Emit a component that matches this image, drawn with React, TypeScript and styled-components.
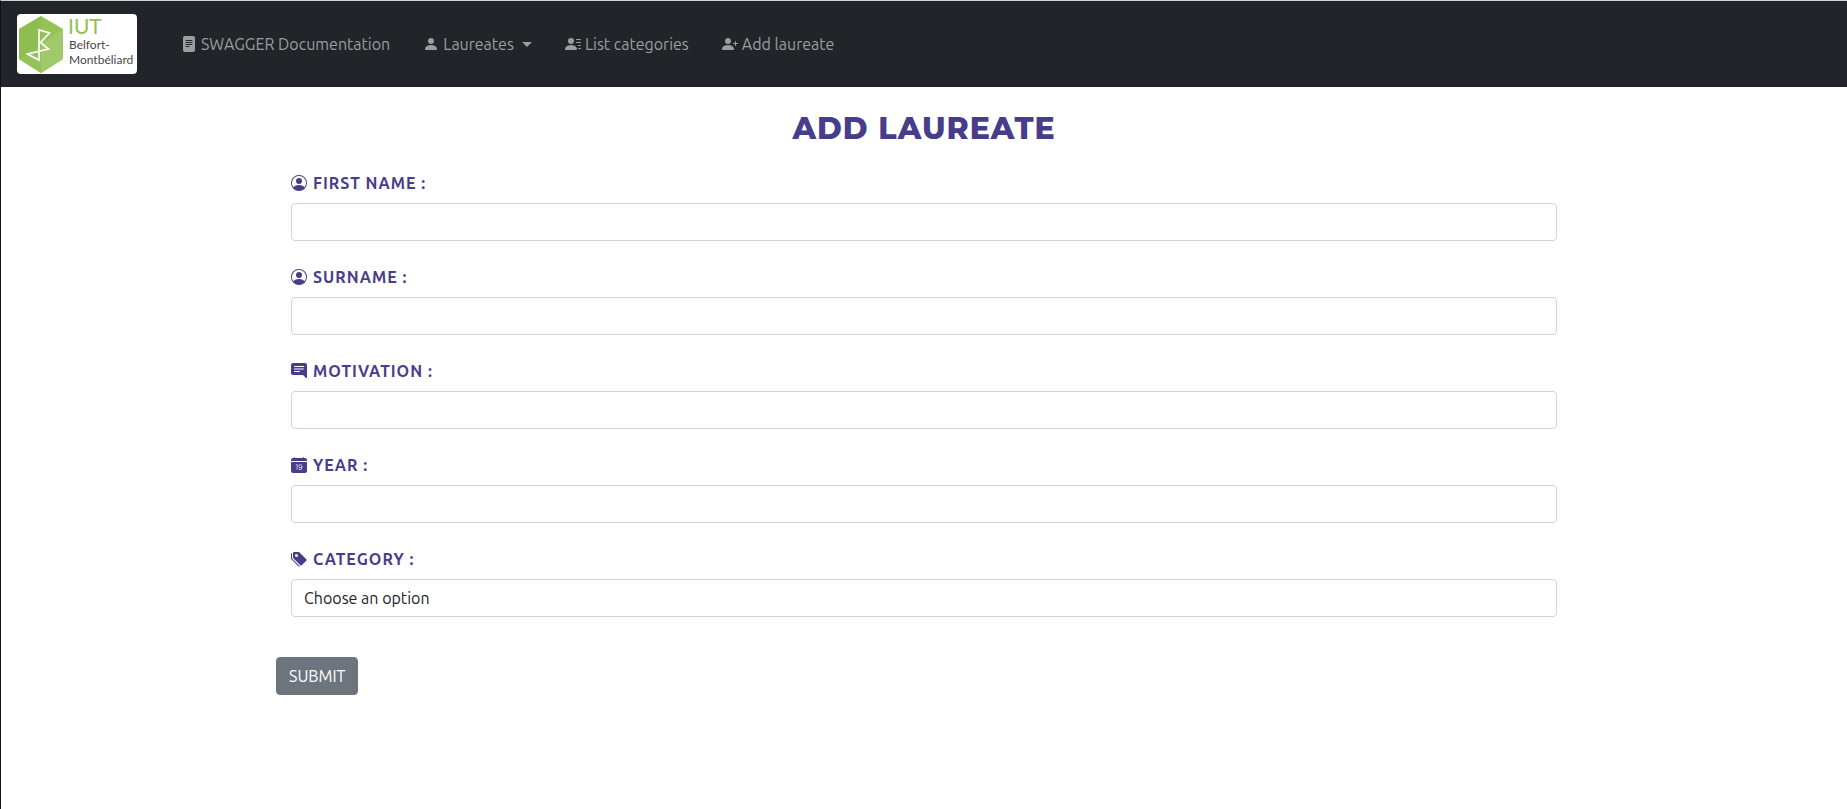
import React, { useId } from "react";
import styled, { createGlobalStyle } from "styled-components";
import {
  BsCalendarDateFill,
  BsChatRightTextFill,
  BsFileTextFill,
  BsPersonCircle,
  BsPersonFill,
  BsPersonLinesFill,
  BsPersonPlusFill,
  BsTagsFill,
} from "react-icons/bs";
import type { IconType } from "react-icons";

const GlobalStyle = createGlobalStyle`
  *, *::before, *::after { box-sizing: border-box; }
  body {
    margin: 0;
    color: #212529;
    background: #fff;
    font: 400 16px/24px Ubuntu, "Noto Sans", sans-serif;
  }
`;

const Page = styled.div`
  min-height: 100vh;
  border-left: 1px solid #101113;
  border-top: 1px solid #c9d3d1;
`;

const Navbar = styled.nav`
  display: flex;
  align-items: center;
  gap: 36px;
  padding: 13px 16px;
  background: #212529;
`;

const Brand = styled.a`
  display: block;
  height: 60px;
`;

const NavList = styled.ul`
  display: flex;
  gap: 17px;
  margin: 0;
  padding: 0;
  list-style: none;
`;

const NavLink = styled.a`
  display: flex;
  align-items: center;
  gap: 4px;
  padding: 8px;
  color: #9b9d9e;
  text-decoration: none;
  white-space: nowrap;
`;

const Caret = styled.span`
  margin-left: 4px;
  border: 5px solid transparent;
  border-top-color: currentColor;
  border-bottom: 0;
`;

const Main = styled.main`
  max-width: 1320px;
  margin: 0 auto;
  padding: 24px 12px;
`;

const Title = styled.h1`
  margin: 0 0 24px;
  color: #483d8b;
  font: 800 30px/36px Montserrat, Inter, sans-serif;
  letter-spacing: 1px;
  text-align: center;
  text-transform: uppercase;
`;

const Fields = styled.div`
  display: grid;
  gap: 24px;
  padding: 0 15px;
  margin-bottom: 40px;
`;

const Field = styled.div`
  display: grid;
  gap: 8px;
`;

const Label = styled.label`
  display: flex;
  align-items: center;
  gap: 6px;
  color: #483d8b;
  font-weight: 700;
  letter-spacing: 1px;
  text-transform: uppercase;
`;

const Input = styled.input`
  width: 100%;
  height: 38px;
  padding: 6px 12px;
  color: #212529;
  background: #fff;
  border: 1px solid #ced4da;
  border-radius: 4px;
  font: inherit;
`;

const Select = styled.select`
  width: 100%;
  height: 38px;
  padding: 6px 12px;
  appearance: none;
  color: #212529;
  background: #fff;
  border: 1px solid #ced4da;
  border-radius: 4px;
  font: inherit;
`;

const Submit = styled.button`
  height: 38px;
  padding: 6px 12px;
  color: #fff;
  background: #6c757d;
  border: 1px solid #6c757d;
  border-radius: 4px;
  font: inherit;
  cursor: pointer;
`;

function Logo() {
  return (
    <svg
      width="120"
      height="60"
      viewBox="0 0 120 60"
      overflow="visible"
      role="img"
      aria-label="IUT Belfort-Montbéliard"
    >
      <rect width="120" height="60" rx="4" fill="#fff" />
      <path d="M24 2 46 15v30L24 59 2 45V15z" fill="#93c255" />
      <path d="M46 15v30L24 59 2 45z" fill="#a0c969" />
      <path d="M24 2v57L2 45V15z" fill="#8abc4c" opacity=".55" />
      <path
        d="M22 46V16l10.500 3-9 9.500 8 6.500-21 5z"
        fill="none"
        stroke="#fff"
        strokeWidth="1.700"
      />
      <g fontFamily="Lato, 'Open Sans', sans-serif">
        <text x="51" y="20" fontSize="21" fill="#8cc152">IUT</text>
        <text x="52" y="35" fontSize="12" fill="#484848">Belfort-</text>
        <text x="52" y="50" fontSize="12" fill="#484848">Montbéliard</text>
      </g>
    </svg>
  );
}

const links: { icon: IconType; text: string; menu?: boolean }[] = [
  { icon: BsFileTextFill, text: "SWAGGER Documentation" },
  { icon: BsPersonFill, text: "Laureates", menu: true },
  { icon: BsPersonLinesFill, text: "List categories" },
  { icon: BsPersonPlusFill, text: "Add laureate" },
];

const textFields: { icon: IconType; text: string }[] = [
  { icon: BsPersonCircle, text: "First name :" },
  { icon: BsPersonCircle, text: "Surname :" },
  { icon: BsChatRightTextFill, text: "Motivation :" },
  { icon: BsCalendarDateFill, text: "Year :" },
];

function TextField({ icon: Icon, text }: { icon: IconType; text: string }) {
  const id = useId();
  return (
    <Field>
      <Label htmlFor={id}>
        <Icon size={16} />
        {text}
      </Label>
      <Input id={id} type="text" />
    </Field>
  );
}

export default function App() {
  return (
    <>
      <GlobalStyle />
      <Page>
        <Navbar>
          <Brand href="#">
            <Logo />
          </Brand>
          <NavList>
            {links.map(({ icon: Icon, text, menu }) => (
              <li key={text}>
                <NavLink href="#">
                  <Icon size={16} />
                  {text}
                  {menu && <Caret />}
                </NavLink>
              </li>
            ))}
          </NavList>
        </Navbar>
        <Main>
          <Title>Add laureate</Title>
          <form>
            <Fields>
              {textFields.map((field) => (
                <TextField key={field.text} {...field} />
              ))}
              <Field>
                <Label htmlFor="category">
                  <BsTagsFill size={16} />
                  Category :
                </Label>
                <Select id="category">
                  <option>Choose an option</option>
                </Select>
              </Field>
            </Fields>
            <Submit type="button">SUBMIT</Submit>
          </form>
        </Main>
      </Page>
    </>
  );
}
